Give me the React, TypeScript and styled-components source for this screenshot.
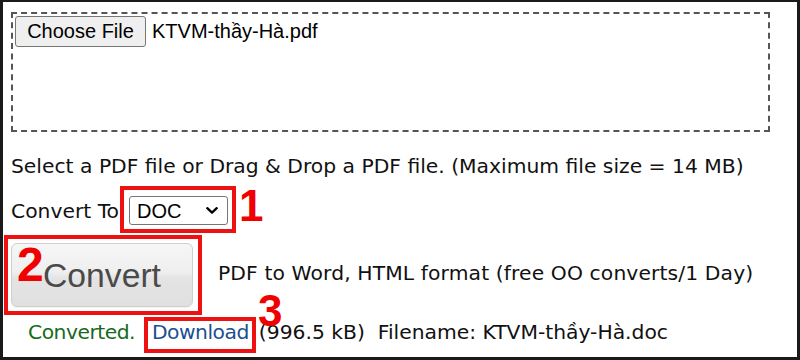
import React from "react";
import styled, { createGlobalStyle } from "styled-components";

const Global = createGlobalStyle`
  html, body { margin: 0; padding: 0; background: #fff; }
  * { box-sizing: border-box; }
`;

const Frame = styled.div`
  position: relative;
  width: 800px;
  height: 360px;
  border-style: solid;
  border-color: #1a1a1a;
  border-width: 2px 3px 3px 3px;
  padding: 10px 0 0 8px;
  background: #fff;
  color: #111;
  font-family: "DejaVu Sans", Verdana, sans-serif;
  font-size: 20.3px;
  overflow: hidden;
`;

const DropZone = styled.div`
  width: 759px;
  height: 120px;
  border: 2px dashed #555;
  padding: 2px;
  display: flex;
  align-items: flex-start;
`;

const FileRow = styled.div`
  display: flex;
  align-items: center;
  gap: 6px;
  font-family: "Liberation Sans", Arial, sans-serif;
  font-size: 20px;
  color: #000;
`;

const FileButton = styled.button`
  width: 131px;
  height: 31px;
  padding: 0;
  background: #efefef;
  border: 1px solid #767676;
  border-radius: 3px;
  font-family: "Liberation Sans", Arial, sans-serif;
  font-size: 20px;
  color: #000;
`;

const Line = styled.div<{ $top: number }>`
  margin-top: ${(p) => p.$top}px;
  height: 28px;
  line-height: 28px;
  white-space: nowrap;
`;

const Row = styled.div<{ $top: number; $height: number }>`
  margin-top: ${(p) => p.$top}px;
  height: ${(p) => p.$height}px;
  display: flex;
  align-items: center;
  white-space: nowrap;
`;

const Label = styled.span`
  flex: 0 0 118px;
  line-height: 28px;
`;

const SelectWrap = styled.div`
  position: relative;
  width: 99px;
  height: 29px;
`;

const Select = styled.select`
  appearance: none;
  width: 99px;
  height: 29px;
  border: 1px solid #767676;
  border-radius: 3px;
  background: #fff;
  padding: 0 0 0 7px;
  font-family: "Liberation Sans", Arial, sans-serif;
  font-size: 20px;
  color: #000;
`;

const Chevron = styled.svg`
  position: absolute;
  right: 10px;
  top: 11px;
  width: 12px;
  height: 7px;
  pointer-events: none;
`;

const ConvertButton = styled.button`
  width: 182px;
  height: 64px;
  padding: 0;
  border: 1px solid #cfcfcf;
  border-radius: 6px;
  background: linear-gradient(#f6f6f6 0%, #efefef 45%, #e4e4e4 55%, #e0e0e0 100%);
  box-shadow: 0 1px 1px rgba(0, 0, 0, 0.06);
  font-family: "Liberation Sans", Arial, sans-serif;
  font-size: 33.7px;
  color: #4a4a4a;
`;

const Description = styled.span`
  margin-left: 25px;
  margin-bottom: 4px;
  line-height: 28px;
  letter-spacing: 0.12px;
`;

const Status = styled.span`
  margin-left: 17px;
  color: #176a1c;
  letter-spacing: -0.5px;
`;

const DownloadLink = styled.a`
  margin-left: 17px;
  color: #1b4f91;
  text-decoration: none;
  letter-spacing: -0.5px;
`;

const Meta = styled.span`
  margin-left: 10px;
  white-space: pre;
`;

const Annot = styled.div<{ $x: number; $y: number; $w: number; $h: number }>`
  position: absolute;
  left: ${(p) => p.$x}px;
  top: ${(p) => p.$y}px;
  width: ${(p) => p.$w}px;
  height: ${(p) => p.$h}px;
  border: 4px solid #ee1111;
  pointer-events: none;
`;

const Digit = styled.span<{ $x: number; $y: number; $size: number }>`
  position: absolute;
  left: ${(p) => p.$x}px;
  top: ${(p) => p.$y}px;
  font-family: "Liberation Sans", Arial, sans-serif;
  font-weight: 700;
  font-size: ${(p) => p.$size}px;
  line-height: ${(p) => p.$size}px;
  color: #f00000;
`;

export default function App() {
  return (
    <>
      <Global />
      <Frame>
        <DropZone>
          <FileRow>
            <FileButton>Choose File</FileButton>
            <span>KTVM-thầy-Hà.pdf</span>
          </FileRow>
        </DropZone>

        <Line $top={20}>
          Select a PDF file or Drag &amp; Drop a PDF file. (Maximum file size = 14 MB)
        </Line>

        <Row $top={16} $height={29}>
          <Label>Convert To</Label>
          <SelectWrap>
            <Select defaultValue="DOC">
              <option value="DOC">DOC</option>
            </Select>
            <Chevron viewBox="0 0 12 7">
              <polyline
                points="1.3,1.2 6,5.6 10.7,1.2"
                fill="none"
                stroke="#000"
                strokeWidth="2.3"
                strokeLinecap="round"
                strokeLinejoin="round"
              />
            </Chevron>
          </SelectWrap>
        </Row>

        <Row $top={18} $height={64}>
          <ConvertButton>Convert</ConvertButton>
          <Description>PDF to Word, HTML format (free OO converts/1 Day)</Description>
        </Row>

        <Row $top={11} $height={28}>
          <Status>Converted.</Status>
          <DownloadLink href="#">Download</DownloadLink>
          <Meta>{"(996.5 kB)  Filename: KTVM-thầy-Hà.doc"}</Meta>
        </Row>

        <Annot $x={117} $y={184} $w={116} $h={47} />
        <Annot $x={1} $y={233} $w={198} $h={80} />
        <Annot $x={141} $y={315} $w={112} $h={36} />
        <Digit $x={236} $y={182} $size={44}>1</Digit>
        <Digit $x={14} $y={239} $size={48}>2</Digit>
        <Digit $x={255} $y={287} $size={44}>3</Digit>
      </Frame>
    </>
  );
}
